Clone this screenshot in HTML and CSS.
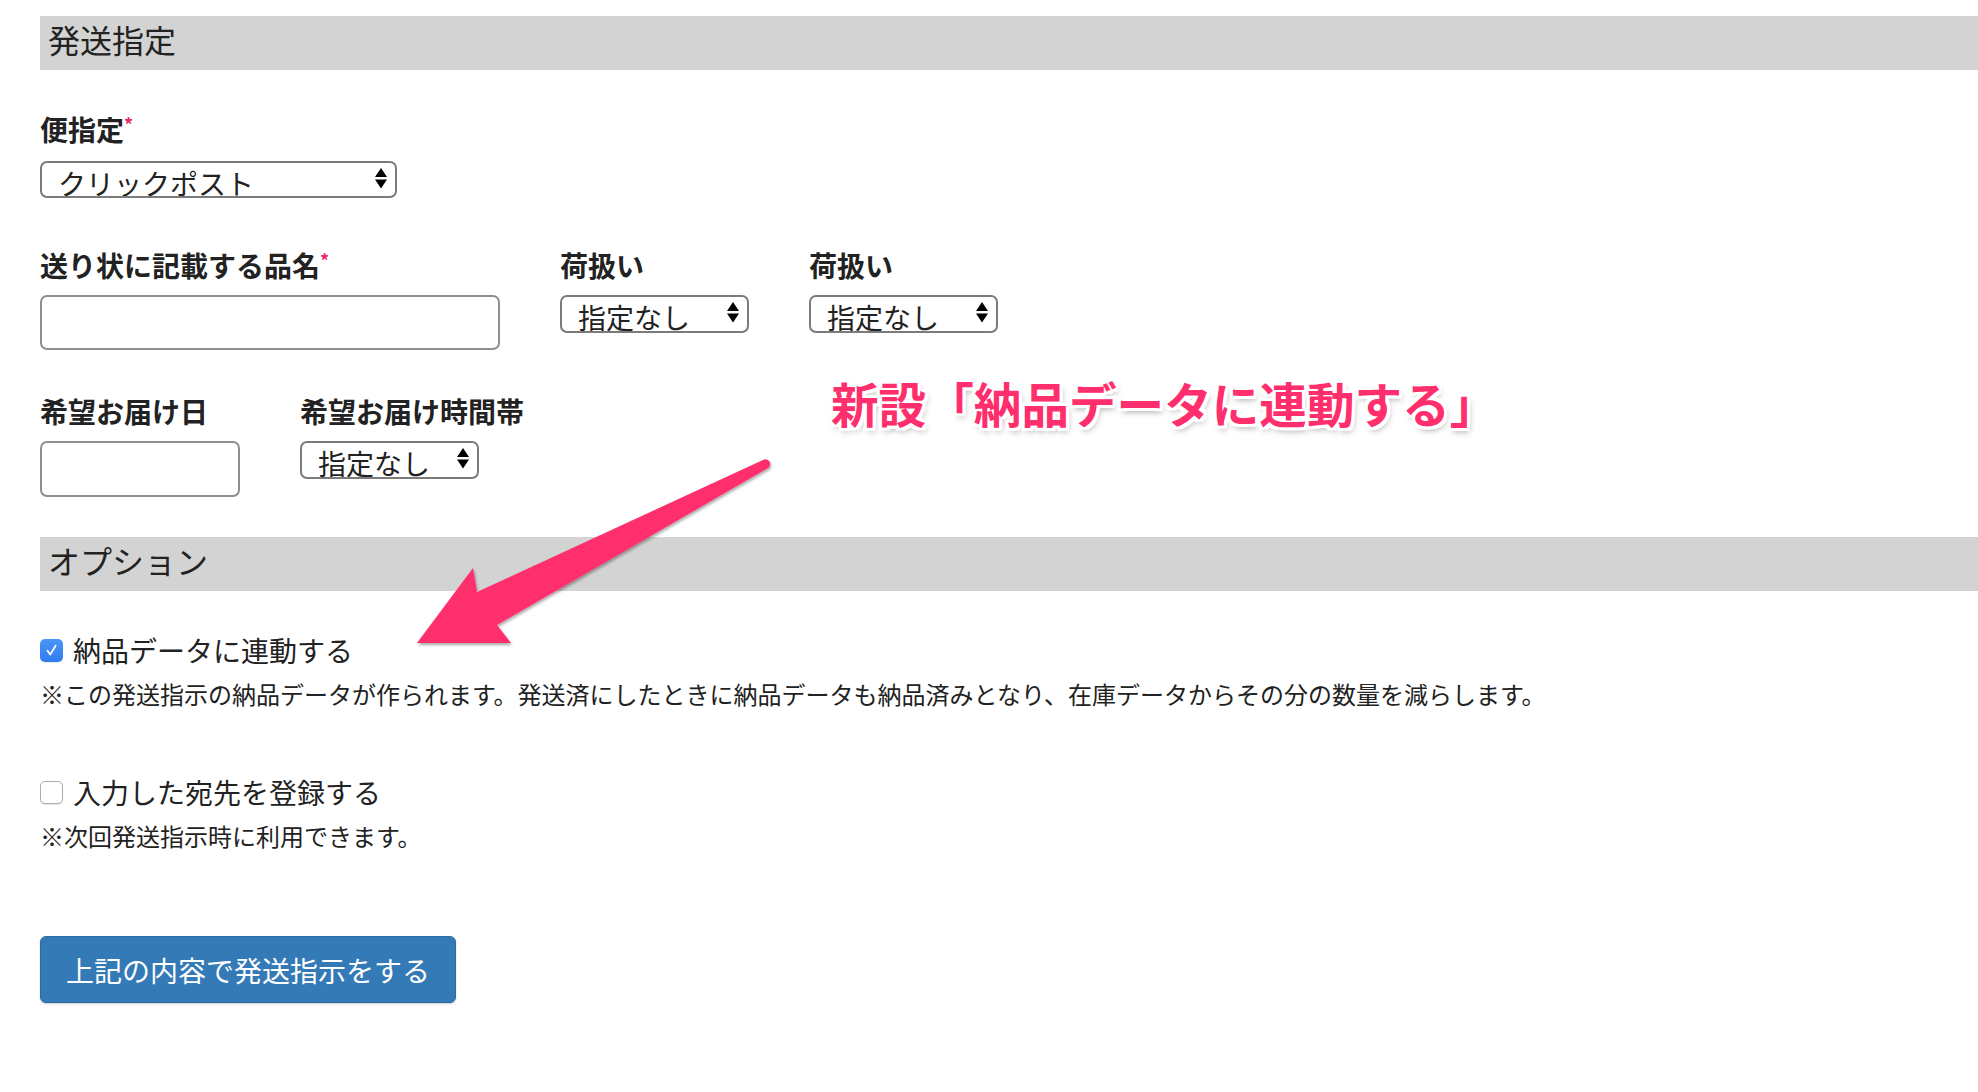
FILE: index.html
```html
<!DOCTYPE html>
<html lang="ja">
<head>
    <meta charset="UTF-8">
    <meta name="viewport" content="width=device-width, initial-scale=1.0">
    <title>発送指定</title>
    <link rel="stylesheet" href="styles.css">
</head>
<body>
    <div class="page">
        <h2 class="section-title">発送指定</h2>

        <div class="form-row first">
            <div class="field">
                <label>便指定<span class="req">*</span></label>
                <div class="select wide">
                    <span>クリックポスト</span>
                    <svg width="12" height="21" viewBox="0 0 12 21"><polygon points="6,0 12,9 0,9"/><polygon points="0,11.5 12,11.5 6,20.5"/></svg>
                </div>
            </div>
        </div>

        <div class="form-row spaced">
            <div class="field">
                <label>送り状に記載する品名<span class="req">*</span></label>
                <input type="text" class="text-input name">
            </div>
            <div class="field">
                <label>荷扱い</label>
                <div class="select mid">
                    <span>指定なし</span>
                    <svg width="12" height="21" viewBox="0 0 12 21"><polygon points="6,0 12,9 0,9"/><polygon points="0,11.5 12,11.5 6,20.5"/></svg>
                </div>
            </div>
            <div class="field">
                <label>荷扱い</label>
                <div class="select mid">
                    <span>指定なし</span>
                    <svg width="12" height="21" viewBox="0 0 12 21"><polygon points="6,0 12,9 0,9"/><polygon points="0,11.5 12,11.5 6,20.5"/></svg>
                </div>
            </div>
        </div>

        <div class="form-row">
            <div class="field">
                <label>希望お届け日</label>
                <input type="text" class="text-input date">
            </div>
            <div class="field">
                <label>希望お届け時間帯</label>
                <div class="select narrow">
                    <span>指定なし</span>
                    <svg width="12" height="21" viewBox="0 0 12 21"><polygon points="6,0 12,9 0,9"/><polygon points="0,11.5 12,11.5 6,20.5"/></svg>
                </div>
            </div>
        </div>

        <h2 class="section-title options">オプション</h2>

        <div class="option">
            <div class="check-row">
                <span class="cbox checked">
                    <svg width="23" height="23" viewBox="0 0 23 23"><path d="M7.5 11.8 L10.2 15.6 L15.6 6.8" fill="none" stroke="#fff" stroke-width="1.8" stroke-linecap="round" stroke-linejoin="round"/></svg>
                </span>
                <span>納品データに連動する</span>
            </div>
            <p class="note">※この発送指示の納品データが作られます。発送済にしたときに納品データも納品済みとなり、在庫データからその分の数量を減らします。</p>
        </div>

        <div class="option second">
            <div class="check-row">
                <span class="cbox"></span>
                <span>入力した宛先を登録する</span>
            </div>
            <p class="note">※次回発送指示時に利用できます。</p>
        </div>

        <button class="submit">上記の内容で発送指示をする</button>

        <!-- annotation -->
        <div class="callout">新設「納品データに連動する」</div>
        <svg class="arrow" width="380" height="210" viewBox="400 450 380 210">
            <defs>
                <filter id="shadow" x="-10%" y="-10%" width="130%" height="130%">
                    <feDropShadow dx="1" dy="2" stdDeviation="1.5" flood-color="#000" flood-opacity="0.35"/>
                </filter>
            </defs>
            <path d="M763 460 L477 592 L473 568 L417 643 L511 643 L497 625 L768 468 A4.5 4.5 0 0 0 763 460 Z" fill="#ff2e6c" filter="url(#shadow)"/>
        </svg>
    </div>
</body>
</html>
```

FILE: styles.css
```css
body {
    margin: 0;
    padding: 0;
    font-family: "Noto Sans CJK JP", "Noto Sans", sans-serif;
    color: #222;
    background-color: #fff;
}

.page {
    position: relative;
    padding: 16px 0 60px 40px;
}

.section-title {
    margin: 0;
    height: 54px;
    line-height: 47px;
    padding-left: 8px;
    background-color: #d3d3d3;
    font-size: 32px;
    font-weight: normal;
}

.section-title.options {
    margin-top: 40px;
}

.form-row {
    display: flex;
    gap: 60px;
    margin-top: 41px;
}

.form-row.first {
    margin-top: 39px;
}

.form-row.spaced {
    margin-top: 47px;
}

.field label {
    display: block;
    font-size: 28px;
    font-weight: bold;
    line-height: 40px;
    margin-bottom: 10px;
    white-space: nowrap;
}

.form-row.first .field label {
    margin-bottom: 12px;
}

.req {
    color: #e8296a;
    font-size: 18px;
    vertical-align: top;
    line-height: 30px;
}

.select {
    position: relative;
    box-sizing: border-box;
    height: 38px;
    padding: 6px 0 0 16px;
    border: 2px solid #7b7b7b;
    border-radius: 7px;
    font-size: 28px;
    line-height: 28px;
    overflow: hidden;
    background: #fff;
}

.select svg {
    position: absolute;
    right: 8px;
    top: 5px;
}

.select.wide {
    width: 357px;
    height: 37px;
}

.select.mid {
    width: 189px;
}

.select.narrow {
    width: 179px;
}

.text-input {
    display: block;
    box-sizing: border-box;
    height: 55px;
    border: 2px solid #8f8f8f;
    border-radius: 7px;
    background: #fff;
    margin: 0;
}

.text-input.name {
    width: 460px;
}

.text-input.date {
    width: 200px;
    height: 56px;
}

.option {
    margin-top: 39px;
}

.option.second {
    margin-top: 61px;
}

.check-row {
    display: flex;
    align-items: center;
    gap: 10px;
    font-size: 28px;
    line-height: 40px;
}

.cbox {
    box-sizing: border-box;
    width: 23px;
    height: 23px;
    border: 1px solid #acacac;
    border-radius: 5px;
    background: #fff;
    box-shadow: 0 1px 1px rgba(0, 0, 0, 0.1);
}

.cbox.checked {
    border: none;
    background: linear-gradient(#4b95f8, #2f7cf0);
}

.cbox svg {
    display: block;
}

.note {
    margin: 7px 0 0;
    font-size: 24px;
    line-height: 34px;
}

.submit {
    display: block;
    margin-top: 83px;
    height: 67px;
    padding: 0 25px;
    font-family: inherit;
    font-size: 28px;
    color: #fff;
    background-color: #337ab7;
    border: 1px solid #2e6da4;
    border-radius: 6px;
    box-shadow: 0 1px 2px rgba(0, 0, 0, 0.2);
    cursor: pointer;
}

.callout {
    position: absolute;
    left: 831px;
    top: 379px;
    font-size: 47.6px;
    font-weight: bold;
    line-height: 1;
    color: #ff2e6c;
    white-space: nowrap;
    text-shadow: -3px -3px 0 #fff, 3px -3px 0 #fff, -3px 3px 0 #fff, 3px 3px 0 #fff,
        0 -3px 0 #fff, 0 3px 0 #fff, -3px 0 0 #fff, 3px 0 0 #fff,
        2px 4px 6px rgba(0, 0, 0, 0.35);
}

.arrow {
    position: absolute;
    left: 400px;
    top: 450px;
    pointer-events: none;
}
```
